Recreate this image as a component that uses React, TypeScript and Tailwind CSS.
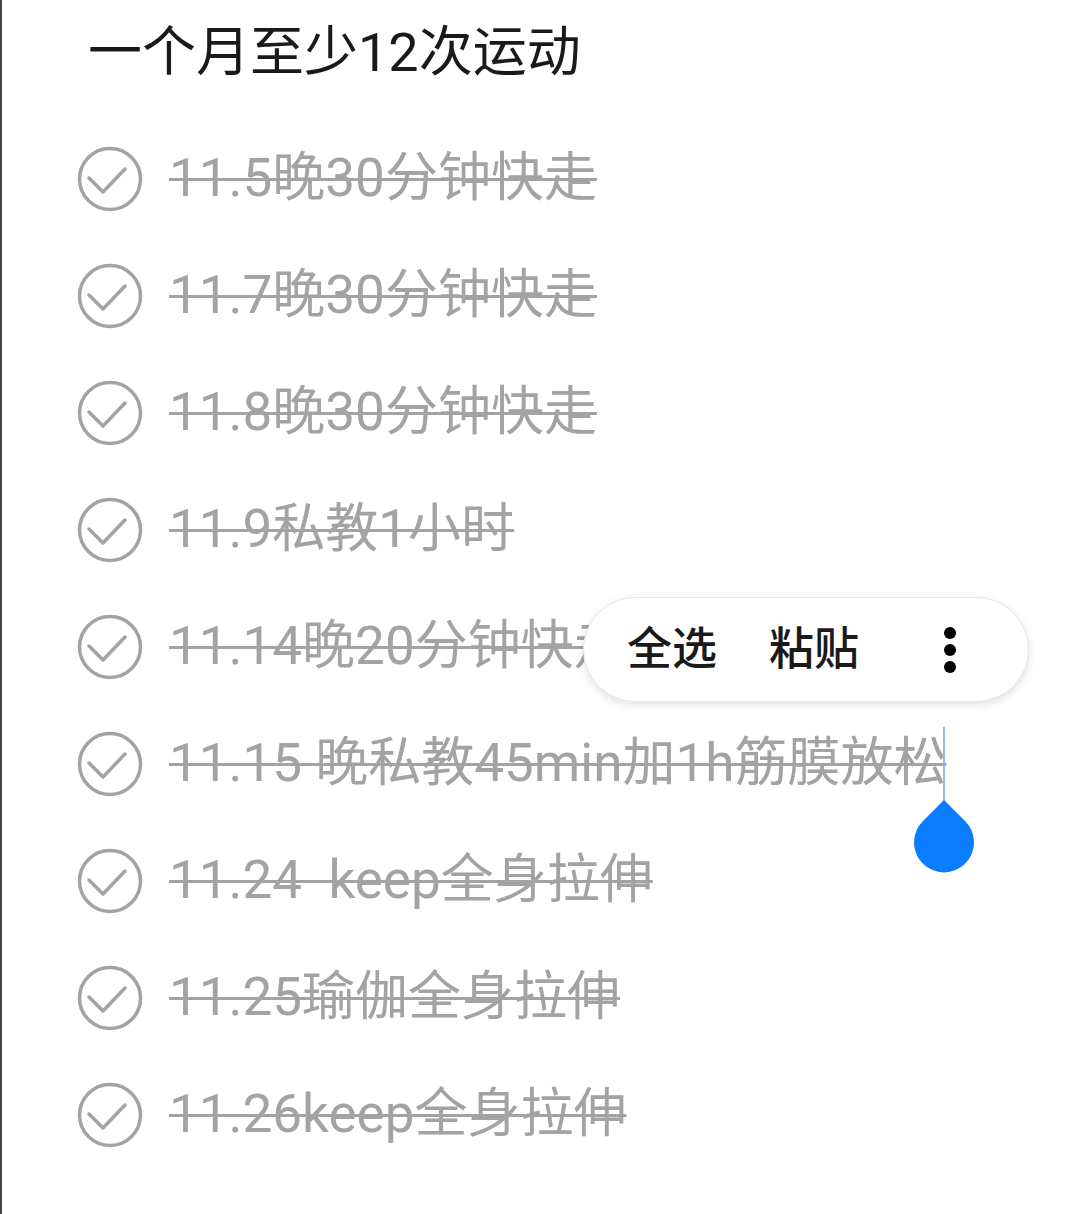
import React from 'react';

const items = [
  '11.5晚30分钟快走',
  '11.7晚30分钟快走',
  '11.8晚30分钟快走',
  '11.9私教1小时',
  '11.14晚20分钟快走',
  '11.15 晚私教45min加1h筋膜放松',
  '11.24  keep全身拉伸',
  '11.25瑜伽全身拉伸',
  '11.26keep全身拉伸',
];

const CheckCircle: React.FC = () => (
  <svg width="66" height="66" viewBox="0 0 66 66" className="shrink-0">
    <circle cx="33" cy="33" r="30.5" fill="none" stroke="#a3a3a3" strokeWidth="3.5" />
    <path d="M12 32 L26 46 L48 23" fill="none" stroke="#a3a3a3" strokeWidth="3.5" strokeLinecap="round" strokeLinejoin="round" />
  </svg>
);

export default function App() {
  return (
    <div
      className="relative w-[1080px] h-[1214px] bg-white border-l-2 border-[#444] overflow-hidden"
      style={{ fontFamily: 'Roboto, "Noto Sans CJK SC", sans-serif' }}
    >
      {/* 标题 */}
      <div className="h-[120px] pl-[86px] flex items-start pt-[21px]">
        <h1 className="text-[54px] leading-[64px] text-[#1a1a1a]">一个月至少12次运动</h1>
      </div>

      {/* 已完成列表 */}
      <ul className="flex flex-col">
        {items.map((t) => (
          <li key={t} className="h-[117px] flex items-center pl-[75px] gap-[26px]">
            <CheckCircle />
            <span className="text-[53px] leading-none text-[#a3a3a3] line-through decoration-[3px] decoration-[#a3a3a3] whitespace-pre">
              {t}
            </span>
          </li>
        ))}
      </ul>

      {/* 文本选择菜单 */}
      <div className="absolute left-[581px] top-[597px] w-[446px] h-[105px] rounded-full bg-white border border-[#e6e6e6] shadow-[0_3px_8px_rgba(0,0,0,0.12)] flex items-center pl-[43px] pr-[72px]">
        <span className="text-[45px] font-medium text-[#1a1a1a]">全选</span>
        <span className="text-[45px] font-medium text-[#1a1a1a] ml-[52px]">粘贴</span>
        <div className="ml-auto flex flex-col gap-[5px]">
          <span className="block w-[12px] h-[12px] rounded-full bg-black" />
          <span className="block w-[12px] h-[12px] rounded-full bg-black" />
          <span className="block w-[12px] h-[12px] rounded-full bg-black" />
        </div>
      </div>

      {/* 光标与拖动手柄 */}
      <div className="absolute left-[941px] top-[727px] w-[2px] h-[76px] bg-[#8fbaf5]" />
      <svg className="absolute left-[910px] top-[798px]" width="64" height="76" viewBox="0 0 64 76">
        <path d="M32 2 L53 23 A30 30 0 1 1 11 23 Z" fill="#0a7cff" />
      </svg>
    </div>
  );
}
